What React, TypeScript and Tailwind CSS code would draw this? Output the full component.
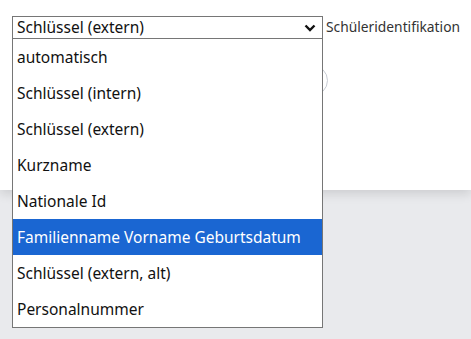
const options = [
  "automatisch",
  "Schlüssel (intern)",
  "Schlüssel (extern)",
  "Kurzname",
  "Nationale Id",
  "Familienname Vorname Geburtsdatum",
  "Schlüssel (extern, alt)",
  "Personalnummer",
];

const selectedIdx = 5;

export default function App() {
  return (
    <div className="relative h-[339px] w-[471px] overflow-hidden bg-[#e9eaed] font-['Noto_Sans',sans-serif] text-[#111]">
      {/* Card */}
      <div className="h-[190px] bg-white shadow-[0_4px_10px_rgba(0,0,0,0.12)]">
        <div className="flex items-center gap-[3px] pl-[12px] pt-[16px]">
          <div className="relative flex h-[23px] w-[311px] items-center border border-[#767676] bg-white pl-[4px]">
            <span className="text-[15.5px] leading-none">Schlüssel (extern)</span>
            <svg
              className="absolute right-[6px] top-[5px] h-[12px] w-[12px]"
              viewBox="0 0 12 12"
              fill="none"
              stroke="#111"
              strokeWidth={2.4}
            >
              <path d="M1.5 3.5l4.5 4.5 4.5-4.5" />
            </svg>
          </div>
          <span className="text-[13.8px] text-[#333]">Schüleridentifikation</span>
        </div>
        {/* radio circle peeking out behind list */}
        <div className="ml-[297px] mt-[26px] h-[31px] w-[31px] rounded-full border border-[#c8ccd4]" />
      </div>

      {/* Open dropdown list */}
      <ul className="absolute left-[12px] top-[38px] w-[311px] border border-[#767676] bg-white">
        {options.map((opt, idx) => (
          <li
            key={opt}
            className={
              idx === selectedIdx
                ? "flex h-[36px] items-center bg-[#1a66d2] pl-[4px] pt-[2px] text-[15.5px] text-white"
                : "flex h-[36px] items-center pl-[4px] pt-[2px] text-[15.5px]"
            }
          >
            {opt}
          </li>
        ))}
      </ul>
    </div>
  );
}
